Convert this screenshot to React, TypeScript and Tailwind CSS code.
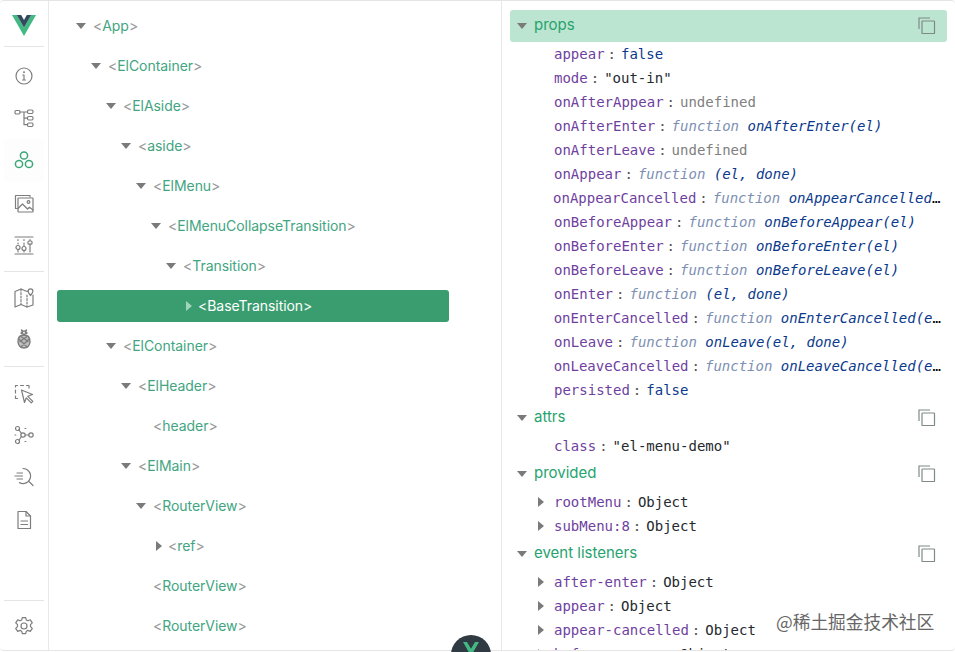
import type { ReactNode } from "react";

type TreeRow = { name: string; depth: number; caret?: "down" | "right"; selected?: boolean };

const treeRows: TreeRow[] = [
  { name: "App", depth: 0, caret: "down" },
  { name: "ElContainer", depth: 1, caret: "down" },
  { name: "ElAside", depth: 2, caret: "down" },
  { name: "aside", depth: 3, caret: "down" },
  { name: "ElMenu", depth: 4, caret: "down" },
  { name: "ElMenuCollapseTransition", depth: 5, caret: "down" },
  { name: "Transition", depth: 6, caret: "down" },
  { name: "BaseTransition", depth: 7, caret: "right", selected: true },
  { name: "ElContainer", depth: 2, caret: "down" },
  { name: "ElHeader", depth: 3, caret: "down" },
  { name: "header", depth: 4 },
  { name: "ElMain", depth: 3, caret: "down" },
  { name: "RouterView", depth: 4, caret: "down" },
  { name: "ref", depth: 5, caret: "right" },
  { name: "RouterView", depth: 4 },
  { name: "RouterView", depth: 4 },
];

type Kind = "bool" | "str" | "undef" | "fn" | "obj";
type Prop = { k: string; kind: Kind; v: string; sig?: string; caret?: boolean };

const props: Prop[] = [
  { k: "appear", kind: "bool", v: "false" },
  { k: "mode", kind: "str", v: '"out-in"' },
  { k: "onAfterAppear", kind: "undef", v: "undefined" },
  { k: "onAfterEnter", kind: "fn", v: "function", sig: "onAfterEnter(el)" },
  { k: "onAfterLeave", kind: "undef", v: "undefined" },
  { k: "onAppear", kind: "fn", v: "function", sig: "(el, done)" },
  { k: "onAppearCancelled", kind: "fn", v: "function", sig: "onAppearCancelled(el)" },
  { k: "onBeforeAppear", kind: "fn", v: "function", sig: "onBeforeAppear(el)" },
  { k: "onBeforeEnter", kind: "fn", v: "function", sig: "onBeforeEnter(el)" },
  { k: "onBeforeLeave", kind: "fn", v: "function", sig: "onBeforeLeave(el)" },
  { k: "onEnter", kind: "fn", v: "function", sig: "(el, done)" },
  { k: "onEnterCancelled", kind: "fn", v: "function", sig: "onEnterCancelled(el)" },
  { k: "onLeave", kind: "fn", v: "function", sig: "onLeave(el, done)" },
  { k: "onLeaveCancelled", kind: "fn", v: "function", sig: "onLeaveCancelled(el)" },
  { k: "persisted", kind: "bool", v: "false" },
];

const sections: { title: string; active?: boolean; rows: Prop[] }[] = [
  { title: "props", active: true, rows: props },
  { title: "attrs", rows: [{ k: "class", kind: "str", v: '"el-menu-demo"' }] },
  {
    title: "provided",
    rows: [
      { k: "rootMenu", kind: "obj", v: "Object", caret: true },
      { k: "subMenu:8", kind: "obj", v: "Object", caret: true },
    ],
  },
  {
    title: "event listeners",
    rows: [
      { k: "after-enter", kind: "obj", v: "Object", caret: true },
      { k: "appear", kind: "obj", v: "Object", caret: true },
      { k: "appear-cancelled", kind: "obj", v: "Object", caret: true },
      { k: "before-appear", kind: "obj", v: "Object", caret: true },
    ],
  },
];

function Icon({ children }: { children: ReactNode }) {
  return (
    <svg
      viewBox="0 0 24 24"
      className="h-6 w-6"
      fill="none"
      stroke="currentColor"
      strokeWidth="1.2"
      strokeLinecap="round"
      strokeLinejoin="round"
    >
      {children}
    </svg>
  );
}

function NavItem({ children, active }: { children: ReactNode; active?: boolean }) {
  return (
    <div
      className={`flex h-[42.2px] w-[40px] shrink-0 items-center justify-center rounded ${
        active ? "bg-[#fcfdfc] text-[#3ba776]" : "text-[#7d7d7d]"
      }`}
    >
      {children}
    </div>
  );
}

function Sidebar() {
  return (
    <aside className="flex w-[49px] shrink-0 flex-col items-center border-r border-[#e8e8e8]">
      <div className="flex h-[46px] w-[40px] shrink-0 items-center justify-center border-b border-[#e5e5e5]">
        <svg viewBox="0 0 24 21" className="mt-[4px] h-[21px] w-[24px]">
          <path d="M0 0h4.8L12 12.4 19.2 0H24L12 21z" fill="#42b883" />
          <path d="M4.8 0h4.4L12 4.9 14.8 0h4.4L12 12.4z" fill="#35495e" />
        </svg>
      </div>
      <div className="flex h-[225px] w-[40px] shrink-0 flex-col items-center border-b border-[#e5e5e5] pt-[8px]">
        <NavItem>
          <Icon>
            <circle cx="12" cy="12" r="8" />
            <path d="M12 11v5M10.5 16h3M10.8 11H12" />
            <circle cx="12" cy="8.3" r=".4" />
          </Icon>
        </NavItem>
        <NavItem>
          <Icon>
            <rect x="3" y="4.5" width="5" height="3.5" rx="1.2" />
            <rect x="15.5" y="4" width="5.5" height="3.5" rx="1.2" />
            <rect x="15.5" y="10.5" width="5.5" height="3.5" rx="1.2" />
            <rect x="15.5" y="17" width="5.5" height="3.5" rx="1.2" />
            <path d="M8 6h7.5M12 6v12.7h3.5M12 12.2h3.5" />
          </Icon>
        </NavItem>
        <NavItem active>
          <Icon>
            <g strokeWidth="1.5">
              <circle cx="12" cy="7.5" r="3.6" />
              <circle cx="7" cy="16" r="3.6" />
              <circle cx="17" cy="16" r="3.6" />
            </g>
          </Icon>
        </NavItem>
        <NavItem>
          <Icon>
            <path d="M5 17.5H3.5V4.5H18V6" />
            <rect x="6" y="7" width="15" height="14" rx=".5" />
            <circle cx="16.5" cy="11" r="1.4" />
            <path d="M6 17.5l4.5-4.5 5 5 2-1.7 3.5 2.7" />
          </Icon>
        </NavItem>
        <NavItem>
          <Icon>
            <path d="M3 4h18M3 21h18" />
            <path d="M6 6.5v1M6 10v1M12 6.5v1M12 10v3M18 6.5v1" strokeDasharray="1 1" />
            <circle cx="6" cy="14.5" r="2" />
            <circle cx="12" cy="15.5" r="2" />
            <rect x="16" y="8" width="4" height="3.2" rx="1" />
            <path d="M6 16.5V19M12 17.5V19M18 11.2V19" />
          </Icon>
        </NavItem>
      </div>
      <div className="flex h-[95px] w-[40px] shrink-0 flex-col items-center border-b border-[#e5e5e5] pt-[4px]">
        <NavItem>
          <Icon>
            <path d="M3 6.5l6-2.5 6 2.5 1-.4M21 10v10l-6 2-6-2.5-6 2.5V6.5" />
            <path d="M9 4v15.5M15 10v12" strokeDasharray="2 1.5" />
            <path d="M18.5 10.5c-1.5-1.8-2.4-3-2.4-4.2a2.4 2.4 0 0 1 4.8 0c0 1.2-.9 2.4-2.4 4.2z" />
          </Icon>
        </NavItem>
        <NavItem>
          <Icon>
            <g strokeWidth="1.4">
              <path d="M12 8c-3.8 0-6 2.7-6 6.4C6 18.3 8.6 21 12 21s6-2.7 6-6.6C18 10.7 15.8 8 12 8z" fill="#8a8a8a" fillOpacity=".55" />
              <path d="M7 12l8 8M17 12l-8 8M9 9.5l7 5M15 9.5l-7 5" />
              <path d="M12 7.5L9 6l1.5-.5L9.500 3l2.500 1.500L14.500 3l-1 2.500L15 6z" />
            </g>
          </Icon>
        </NavItem>
      </div>
      <div className="flex shrink-0 flex-col items-center pt-[5px]">
        <NavItem>
          <Icon>
            <path d="M3.5 6V4.500H5.500M8.500 4.500h3M14.500 4.500h2.500V7M3.500 9v3M3.500 15v2.500H5.500" />
            <path d="M9.500 9l11 4.500-4.700 1.800 5 5-1.500 1.500-5-5-1.800 4.700z" />
          </Icon>
        </NavItem>
        <NavItem>
          <Icon>
            <circle cx="5.5" cy="5.5" r="2" />
            <circle cx="5.5" cy="18.5" r="2" />
            <circle cx="19" cy="12" r="2.2" />
            <circle cx="11" cy="12" r="2.2" />
            <path d="M7 7l2.500 3.500M7 17l2.500-3.500M13.200 12H16.800M13 5.500h.8M13 18.500h.8M3 12h.8" />
          </Icon>
        </NavItem>
        <NavItem>
          <Icon>
            <path d="M11 3.500a7.500 7.500 0 1 1-3.500 14.100M16.500 16L21 20.500M5 8h5.500M3 11h7.500M5 14h5.500" />
          </Icon>
        </NavItem>
        <NavItem>
          <Icon>
            <path d="M6 3.500h8l4.500 4.500v12.500H6z" />
            <path d="M14 3.500V8h4.500M9 13h6.500M9 16.500h6.500" />
          </Icon>
        </NavItem>
      </div>
      <div className="mt-auto flex h-[50px] w-[40px] shrink-0 items-center justify-center border-t border-[#e5e5e5] text-[#7d7d7d]">
        <Icon>
          <path d="M10.3 3.600h3.400l.6 2.400 1.700.8 2.300-1 2 3-1.800 1.800v2l1.800 1.800-2 3-2.300-1-1.700.8-.6 2.400h-3.400l-.6-2.400-1.700-.8-2.300 1-2-3 1.800-1.800v-2L3.700 8.800l2-3 2.300 1 1.700-.8z" />
          <circle cx="12" cy="12" r="3" />
        </Icon>
      </div>
    </aside>
  );
}

function CaretDown({ className }: { className: string }) {
  return (
    <svg viewBox="0 0 10 6" className={`h-[6px] w-[10px] ${className}`}>
      <path d="M0 0h10L5 6z" fill="currentColor" />
    </svg>
  );
}

function CaretRight({ className }: { className: string }) {
  return (
    <svg viewBox="0 0 6 10" className={`h-[10px] w-[6px] ${className}`}>
      <path d="M0 0l6 5-6 5z" fill="currentColor" />
    </svg>
  );
}

function Tree() {
  return (
    <div className="flex w-[452px] shrink-0 flex-col gap-2 pl-2 pr-[52px] pt-[9px] font-['Inter',sans-serif] text-[14px] tracking-[-0.05px]">
      {treeRows.map((row, i) => (
        <div
          key={i}
          className={`flex h-8 shrink-0 items-center rounded-[3px] ${row.selected ? "bg-[#3a9d70]" : ""}`}
          style={{ paddingLeft: 22 + row.depth * 15 }}
        >
          <span
            className={`flex w-[14px] justify-center ${
              row.caret === "right" ? "-translate-x-[2px]" : "-translate-x-[5px]"
            }`}
          >
            {row.caret === "down" && <CaretDown className="text-[#7a7a7a]" />}
            {row.caret === "right" && (
              <CaretRight className={row.selected ? "text-[#9fd6bb]" : "text-[#7a7a7a]"} />
            )}
          </span>
          <span className="-translate-y-px">
            <span className={row.selected ? "text-[#eef8f3]" : "text-[#9a9a9a]"}>&lt;</span>
            <span className={row.selected ? "text-white" : "text-[#42a57f]"}>{row.name}</span>
            <span className={row.selected ? "text-[#eef8f3]" : "text-[#9a9a9a]"}>&gt;</span>
          </span>
        </div>
      ))}
    </div>
  );
}

function CopyIcon() {
  return (
    <svg viewBox="0 0 18 18" className="h-[18px] w-[18px] text-[#7f8a85]" fill="none" stroke="currentColor" strokeWidth="1.2">
      <path d="M1 12V1h11" />
      <rect x="4" y="4" width="12.5" height="12.5" rx=".6" />
    </svg>
  );
}

function Value({ row }: { row: Prop }) {
  if (row.kind === "fn") {
    return (
      <span className="italic">
        <span className="text-[#7d8fb3]">{row.v} </span>
        <span className="text-[#0b3a8c]">{row.sig}</span>
      </span>
    );
  }
  const color =
    row.kind === "bool" ? "text-[#0b3a8c]" : row.kind === "undef" ? "text-[#808080]" : "text-[#24292e]";
  return <span className={color}>{row.v}</span>;
}

function StatePanel() {
  return (
    <div className="flex min-w-0 flex-1 flex-col border-l border-[#e8e8e8] pl-2 pr-2 pt-[9px]">
      {sections.map((section) => (
        <section key={section.title} className="shrink-0">
          <div
            className={`flex h-8 items-center rounded-[3px] pl-[7px] pr-[11px] ${
              section.active ? "bg-[#bce5d1]" : ""
            }`}
          >
            <CaretDown className="text-[#7a7a7a]" />
            <span className="ml-[7px] -translate-y-px font-['Inter',sans-serif] text-[15px] text-[#27a36e]">
              {section.title}
            </span>
            <span className="ml-auto">
              <CopyIcon />
            </span>
          </div>
          <div className="font-['DejaVu_Sans_Mono',monospace] text-[14px]">
            {section.rows.map((row) => (
              <div key={row.k} className="flex h-6 items-center pl-[28px] pr-[6px]">
                <span className="flex w-[16px] justify-start">
                  {row.caret && <CaretRight className="text-[#7a7a7a]" />}
                </span>
                <span className="truncate whitespace-pre">
                  <span className="text-[#6f3fa0]">{row.k}</span>
                  <span className="ml-[3px] mr-[5px] text-[#555]">:</span>
                  <Value row={row} />
                </span>
              </div>
            ))}
          </div>
        </section>
      ))}
    </div>
  );
}

export default function App() {
  return (
    <div className="relative h-[652px] w-[955px] overflow-hidden bg-white">
      <div className="flex h-[651px] overflow-hidden rounded-[4px] border-y border-[#e5e5e5]">
        <Sidebar />
        <Tree />
        <StatePanel />
      </div>
      {/* floating devtools bubble, cut off by the window edge */}
      <div className="absolute left-[451px] top-[635px] flex h-10 w-10 items-start justify-center rounded-full bg-[#2f3a42] pt-[7px]">
        <svg viewBox="0 0 24 21" className="h-[14px] w-[16px]">
          <path d="M0 0h6L12 10 18 0h6L12 21z" fill="#42b883" />
        </svg>
      </div>
      <div className="absolute left-[776px] top-[609px] font-['Noto_Sans_CJK_SC',sans-serif] text-[17.7px] leading-6 text-[#666] [text-shadow:0_0_3px_#fff]">
        @稀土掘金技术社区
      </div>
    </div>
  );
}
